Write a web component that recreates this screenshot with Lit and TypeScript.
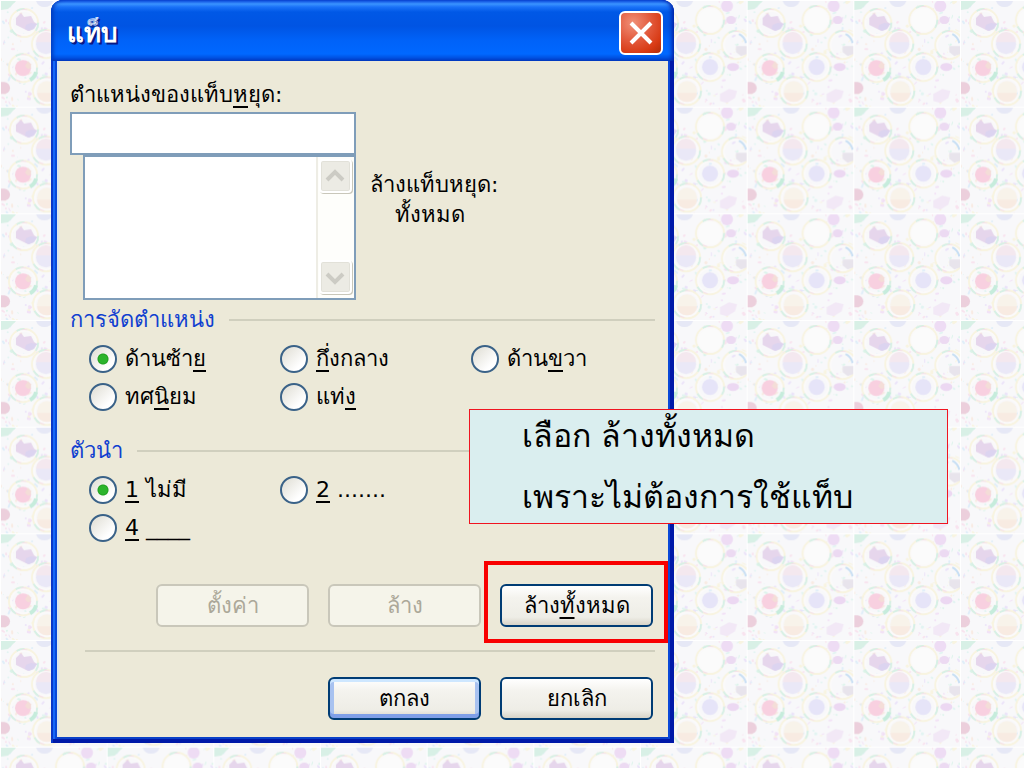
import { LitElement, html, svg, css } from "lit";
import { customElement, property } from "lit/decorators.js";

const SPECK_COLOURS = ["#d4f2e6", "#f8dcea", "#e6dcf8", "#f8f2d8", "#d8eaf8", "#f0daf4", "#f8e6da", "#daf2ee"];

// Small seeded generator, so that the confetti in the tile is the same on every load.
function specks() {
  let seed = 41;
  const next = () => (seed = (seed * 16807) % 2147483647) / 2147483647;
  return Array.from({ length: 180 }, (_, i) => ({
    x: Math.round(next() * 106),
    y: Math.round(next() * 106),
    w: 1 + Math.round(next() * 4),
    h: 1 + Math.round(next() * 2),
    a: Math.round(next() * 180),
    c: SPECK_COLOURS[i % SPECK_COLOURS.length],
  }));
}

// Centres of the beads that carry a broken, many-coloured halo.
const HALOS = [
  [23, 68],
  [70, 67],
  [46, 44],
  [24, 23],
  [70, 20],
  [96, 45],
  [47, 91],
];

@customElement("bead-wallpaper")
export class BeadWallpaper extends LitElement {
  static styles = css`
    :host {
      display: block;
    }
    .art {
      display: block;
      width: 100%;
      height: 100%;
    }
  `;

  render() {
    return html`<svg class="art" aria-hidden="true">
      <defs>
        <pattern id="tile" width="106.667" height="106.667" patternUnits="userSpaceOnUse">
          <rect width="107" height="107" fill="#f8f8fa" />
          ${specks().map(
            (s) => svg`<rect x=${s.x} y=${s.y} width=${s.w} height=${s.h} rx="1" fill=${s.c} opacity="0.75"
              transform=${`rotate(${s.a} ${s.x} ${s.y})`} />`
          )}
          ${HALOS.map(
            ([x, y]) => svg`<g fill="none" stroke-width="2">
              <circle cx=${x} cy=${y} r="14" stroke="#f8f4e0" />
              <circle cx=${x} cy=${y} r="14" stroke="#d6f0e6" stroke-dasharray="8 21" />
              <circle cx=${x} cy=${y} r="13" stroke="#f6dfe8" stroke-dasharray="5 31" stroke-dashoffset="13" />
              <circle cx=${x} cy=${y} r="12" stroke="#fbfafa" />
            </g>`
          )}
          <path d="M36 72a12 12 0 0 1-6 8" fill="none" stroke="#c6ecdc" stroke-width="4" />
          <path d="M99 34c4 2 6 5 7 9" fill="none" stroke="#c8dff4" stroke-width="2" />
          <circle cx="70" cy="20" r="12" fill="#fbfbfb" />
          <circle cx="46" cy="44" r="10" fill="#eae8f7" />
          <path d="M36 42a10 10 0 0 1 20 0z" fill="#f4e8ef" />
          <circle cx="70" cy="67" r="8" fill="#e6e4f8" />
          <circle cx="23" cy="68" r="8" fill="#f8d0e0" />
          <path d="M28 61l3 3 0 4-3 1-3-3z" fill="#f4ddd8" />
          <path d="M16 18l5-5 3 4 7-1 3 6 3 2-4 5-5 2-6-3-6-3z" fill="#e6d6ec" />
          <path d="M26 25l5-2 6 1-3 5-5 2-4-2z" fill="#dcd4f0" />
          <circle cx="47" cy="91" r="10" fill="#f8f3ea" />
          <path d="M37 93h20a10 9 0 0 1-20 0z" fill="#f8ebe2" />
          <path d="M1 82h3a6 6 0 0 1 0 12h-3z" fill="#eccfdc" />
          <path d="M1 1h15l-5 5-3 3-7 1z" fill="#d8f0e6" />
          <path d="M36 1h17a9 9 0 0 1-17 0z" fill="#e6e8f6" />
          <circle cx="87" cy="6" r="6" fill="#eedcf4" />
          <ellipse cx="91" cy="20" rx="5" ry="4" fill="#ecdaf2" />
          <path d="M96 46h11v8l-6 2-5-4z" fill="#e8e4ec" />
          <ellipse cx="93" cy="67" rx="6" ry="4" fill="#ecd8f2" />
          <path d="M80 94l9-5 8 2-2 7-8 5-7-2z" fill="#f2e8f6" />
          <path d="M0 0h107v1h-106v106h-1z" fill="#ffffff" />
        </pattern>
      </defs>
      <rect width="100%" height="100%" fill="url(#tile)" />
    </svg>`;
  }
}

@customElement("group-heading")
export class GroupHeading extends LitElement {
  @property() text = "";

  static styles = css`
    :host {
      display: flex;
      align-items: center;
      gap: 14px;
      color: #1040d0;
      line-height: 24px;
    }
    .rule {
      flex: 1;
      height: 2px;
      background: #d0cfbe;
    }
  `;

  render() {
    return html`<span>${this.text}</span><span class="rule"></span>`;
  }
}

@customElement("app-root")
export class AppRoot extends LitElement {
  static styles = css`
    * {
      box-sizing: border-box;
    }
    :host {
      display: block;
      position: relative;
      min-height: 100vh;
      overflow: hidden;
      background: #f8f8fa;
      color: #000;
      font-family: "DejaVu Sans", "Noto Sans", sans-serif;
      font-size: 22px;
    }
    .wallpaper {
      position: absolute;
      inset: 0;
    }
    .slide {
      position: relative;
      display: grid;
      grid-template-columns: 51fr 623fr 350fr;
    }
    .dialog {
      grid-column: 2;
      padding: 0 6px 6px;
      border-radius: 12px 12px 0 0;
      background: #ece9d8;
      box-shadow: inset 2px 0 #0838c8, inset -4px 0 #0019a8, inset 0 -4px #0019a8, inset 4px 0 #1468f8,
        inset 6px 0 #0848d8, inset -6px 0 #0a48d8, inset 0 -6px #0a40c8, inset 8px 0 #dce6ec;
    }
    .titlebar {
      display: flex;
      align-items: center;
      justify-content: space-between;
      height: 61px;
      margin: 0 -6px;
      padding: 5px 11px 0 16px;
      border-radius: 12px 12px 0 0;
      background: linear-gradient(#0a4be0 0, #3a93ff 4px, #1a72f8 7px, #0058e6 12px, #0054e3 26px, #0062f8 40px, #0068ff 54px, #0050e0 58px, #003dc4 61px);
      box-shadow: inset 4px 0 4px -2px #0038b8, inset -4px 0 4px -2px #001ea0;
    }
    .title {
      margin: 0;
      color: #fff;
      font-size: 26px;
      line-height: 28px;
      text-shadow: 2px 2px #0a1883;
    }
    .close {
      width: 44px;
      height: 44px;
      padding: 0;
      border: 2px solid #fff;
      border-radius: 6px;
      background: radial-gradient(circle at 30% 25%, #f09078, #e2583a 45%, #d83a14 75%, #b02c08);
    }
    .close svg {
      display: block;
      width: 40px;
      height: 40px;
    }
    .body {
      padding: 22px 13px 17px;
    }
    .caption {
      display: block;
      line-height: 24px;
    }
    .positions {
      display: flex;
      gap: 14px;
      margin-top: 5px;
    }
    .entry {
      flex: 0 1 286px;
    }
    .field {
      display: block;
      width: 100%;
      height: 43px;
      padding: 0 8px;
      border: 2px solid #7f9db9;
      background: #fff;
      font: inherit;
    }
    .listbox {
      display: flex;
      height: 145px;
      margin-left: 13px;
      border: 2px solid #7f9db9;
      background: #fff;
    }
    .list {
      flex: 1;
      min-width: 0;
      border: 0;
      background: #fff;
      overflow: hidden;
    }
    .scroll {
      flex: none;
      display: flex;
      flex-direction: column;
      justify-content: space-between;
      width: 38px;
      padding: 2px 2px 4px 1px;
      border-left: 2px solid #eeede5;
      background: #fefefb;
    }
    .arrow {
      width: 33px;
      height: 34px;
      padding: 0;
      border: 2px solid #fff;
      border-radius: 4px;
      background: #ecebe4;
      box-shadow: 1px 1px #c9c7ba, inset 0 0 0 1px #e2e1d9;
    }
    .arrow svg {
      display: block;
      width: 29px;
      height: 30px;
    }
    .clearing {
      padding-top: 58px;
      line-height: 30px;
    }
    .clearing p {
      margin: 0;
    }
    .clearing .value {
      padding-left: 25px;
    }
    .align {
      margin-top: 8px;
    }
    .leader {
      margin-top: 28px;
    }
    .choices {
      display: grid;
      grid-template-columns: 191fr 191fr 184fr;
      row-gap: 10px;
      margin: 13px 0 0 19px;
    }
    .choice {
      display: flex;
      align-items: center;
      gap: 8px;
      line-height: 28px;
      white-space: pre;
    }
    .radio {
      appearance: none;
      flex: none;
      width: 28px;
      height: 28px;
      margin: 0;
      border: 2px solid #3a6288;
      border-radius: 50%;
      background: linear-gradient(135deg, #dedcd2, #fff 75%);
    }
    .radio:checked {
      background: radial-gradient(circle, #2cb42c 0 4px, #21a121 5px, transparent 6px), linear-gradient(135deg, #dedcd2, #fff 75%);
    }
    u {
      text-decoration-thickness: 2px;
      text-underline-offset: 4px;
      text-decoration-skip-ink: none;
    }
    .buttons {
      display: flex;
      justify-content: flex-end;
      gap: 19px;
      padding-right: 2px;
    }
    .clear-row {
      margin-top: 42px;
    }
    .divider {
      height: 2px;
      margin: 23px 0 25px 15px;
      border: 0;
      background: #d0cfbe;
    }
    .button {
      display: block;
      width: 100%;
      height: 43px;
      padding: 0;
      border: 2px solid #003c74;
      border-radius: 6px;
      background: linear-gradient(#fff, #f4f3ee 30%, #eeede6 80%, #d8d4c8);
      color: #000;
      font: inherit;
      line-height: 28px;
      white-space: nowrap;
    }
    .button:disabled {
      border-color: #c9c7ba;
      background: #f5f4ea;
      color: #aca899;
    }
    .button.default {
      box-shadow: inset 0 3px #cee7ff, inset 0 -4px #7f9fe8, inset 4px 0 #a8c2f0, inset -4px 0 #a8c2f0;
    }
    .slot {
      position: relative;
      flex: 0 1 153px;
    }
    .highlight {
      position: absolute;
      inset: -23px -15px -16px -16px;
      border: 4px solid #f80000;
      pointer-events: none;
    }
    .note {
      position: absolute;
      top: 409px;
      left: 45.8%;
      width: 46.8%;
      display: grid;
      gap: 9px;
      padding-left: 52px;
      border: 1px solid #f01420;
      background: #daeeef;
      font-family: Waree, "DejaVu Sans", sans-serif;
      font-size: 32px;
      line-height: 52px;
      white-space: nowrap;
    }
    .note p {
      margin: 0;
    }
  `;

  private radio(group: string, id: string, label: unknown, checked = false) {
    return html`<label class="choice" for=${id}
      ><input class="radio" type="radio" id=${id} name=${group} .checked=${checked} /><span>${label}</span></label
    >`;
  }

  render() {
    return html`
      <bead-wallpaper class="wallpaper"></bead-wallpaper>
      <main class="slide">
        <section class="dialog" role="dialog" aria-labelledby="title">
          <header class="titlebar">
            <h1 class="title" id="title">แท็บ</h1>
            <button class="close" type="button" aria-label="ปิด">
              <svg viewBox="0 0 40 40">
                <path d="M10 10l20 20M30 10L10 30" stroke="#fff" stroke-width="4" />
              </svg>
            </button>
          </header>
          <div class="body">
            <label class="caption" for="position">ตำแหน่งของแท็บ<u>ห</u>ยุด:</label>
            <div class="positions">
              <div class="entry">
                <input class="field" id="position" type="text" />
                <div class="listbox">
                  <select class="list" size="5" aria-label="ตำแหน่งของแท็บหยุด"></select>
                  <div class="scroll">
                    <button class="arrow" type="button" aria-label="เลื่อนขึ้น" disabled>
                      <svg viewBox="0 0 29 30"><path d="M6 19l8-8 8 8" fill="none" stroke="#cccbc4" stroke-width="4" /></svg>
                    </button>
                    <button class="arrow" type="button" aria-label="เลื่อนลง" disabled>
                      <svg viewBox="0 0 29 30"><path d="M6 12l8 8 8-8" fill="none" stroke="#cccbc4" stroke-width="4" /></svg>
                    </button>
                  </div>
                </div>
              </div>
              <div class="clearing">
                <p>ล้างแท็บหยุด:</p>
                <p class="value">ทั้งหมด</p>
              </div>
            </div>

            <group-heading class="align" text="การจัดตำแหน่ง"></group-heading>
            <div class="choices" role="radiogroup" aria-label="การจัดตำแหน่ง">
              ${this.radio("align", "left", html`ด้านซ้า<u>ย</u>`, true)}
              ${this.radio("align", "center", html`<u>กึ่</u>งกลาง`)}
              ${this.radio("align", "right", html`ด้าน<u>ข</u>วา`)}
              ${this.radio("align", "decimal", html`ทศ<u>นิ</u>ยม`)}
              ${this.radio("align", "bar", html`แท่<u>ง</u>`)}
            </div>

            <group-heading class="leader" text="ตัวนำ"></group-heading>
            <div class="choices" role="radiogroup" aria-label="ตัวนำ">
              ${this.radio("leader", "none", html`<u>1</u> ไม่มี`, true)}
              ${this.radio("leader", "dots", html`<u>2</u> .......`)}
              <span></span>
              ${this.radio("leader", "line", html`<u>4</u> ____`)}
            </div>

            <div class="buttons clear-row">
              <div class="slot"><button class="button" type="button" disabled>ตั้งค่า</button></div>
              <div class="slot"><button class="button" type="button" disabled>ล้าง</button></div>
              <div class="slot">
                <button class="button" type="button">ล้าง<u>ทั้</u>งหมด</button>
                <span class="highlight"></span>
              </div>
            </div>
            <hr class="divider" />
            <div class="buttons">
              <div class="slot"><button class="button default" type="button">ตกลง</button></div>
              <div class="slot"><button class="button" type="button">ยกเลิก</button></div>
            </div>
          </div>
        </section>
        <aside class="note">
          <p>เลือก ล้างทั้งหมด</p>
          <p>เพราะไม่ต้องการใช้แท็บ</p>
        </aside>
      </main>
    `;
  }
}
